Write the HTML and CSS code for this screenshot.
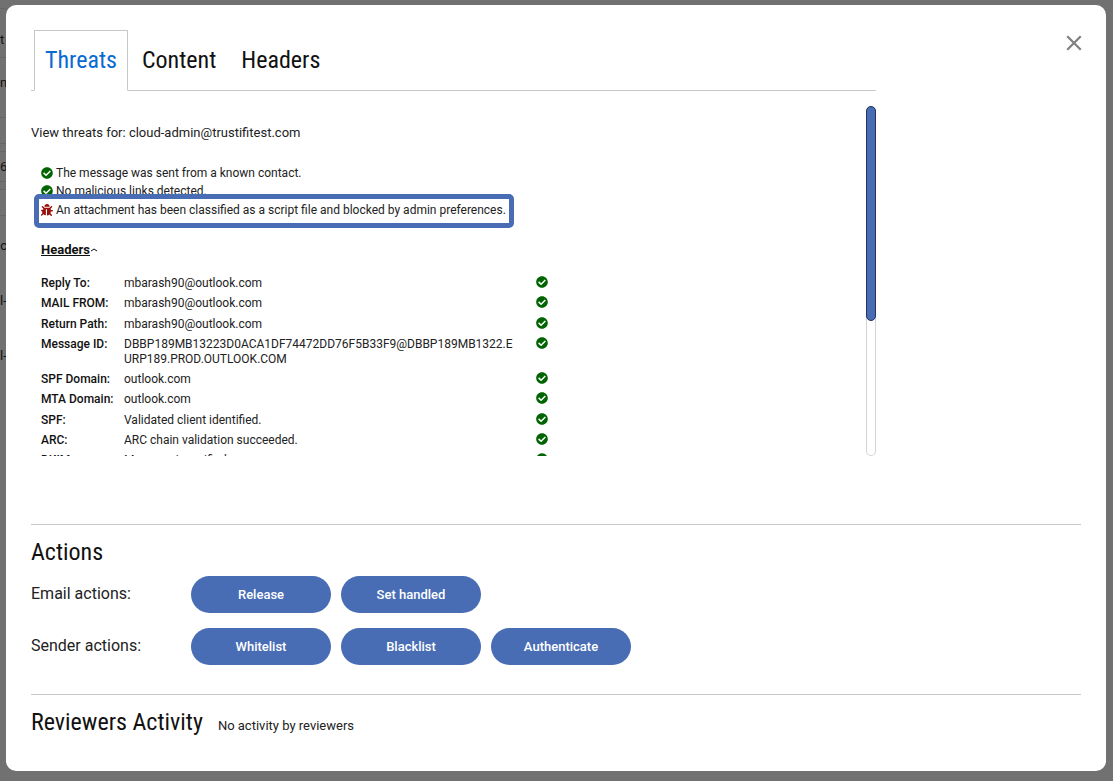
FILE: index.html
```html
<!DOCTYPE html>
<html lang="en">
<head>
    <meta charset="UTF-8">
    <meta name="viewport" content="width=device-width, initial-scale=1.0">
    <title>Threats</title>
    <link rel="stylesheet" href="styles.css">
</head>
<body>
    <svg class="sprite" aria-hidden="true">
        <symbol id="check" viewBox="0 0 512 512">
            <path fill="currentColor" d="M504 256c0 137-111 248-248 248S8 393 8 256 119 8 256 8s248 111 248 248zM227 387l184-184c6-6 6-16 0-22l-22-23c-7-6-17-6-23 0L216 308l-70-70c-6-6-16-6-23 0l-22 23c-6 6-6 16 0 22l104 104c6 6 16 6 22 0z"/>
        </symbol>
        <symbol id="bug" viewBox="0 0 512 512">
            <path fill="currentColor" d="M512 289c-1 17-16 31-33 31h-63v16c0 22-5 44-14 63l60 59a32 32 0 0 1-45 45l-54-54c-29 24-65 39-107 39V236c0-7-5-12-12-12h-24c-7 0-12 5-12 12v244c-42 0-78-15-107-39l-54 54a32 32 0 0 1-45-45l60-59c-9-19-14-41-14-63v-16H33c-17 0-32-14-33-31-1-18 14-33 32-33h64v-59L41 143a32 32 0 0 1 45-46l68 63h204l68-63a32 32 0 0 1 45 46l-55 54v59h64c18 0 33 15 32 33zM257 0c-62 0-112 50-112 112h224C369 50 319 0 257 0z"/>
        </symbol>
    </svg>

    <!-- Page under the dialog -->
    <div class="underlay" aria-hidden="true">
        <div class="strip strip-head"></div>
        <div class="strip strip-first">t</div>
        <div class="strip strip-second">n</div>
        <div class="strip strip-gap"></div>
        <div class="strip strip-thin"></div>
        <div class="strip strip-field">6</div>
        <div class="strip strip-thin"></div>
        <div class="strip strip-gap"></div>
        <div class="strip strip-row strip-cut">oc</div>
        <div class="strip strip-row">l-</div>
        <div class="strip strip-row">l-</div>
    </div>

    <main class="modal" role="dialog" aria-label="Threats">
        <button type="button" class="close" aria-label="Close">
            <svg viewBox="0 0 16 16"><path d="M2 2l12 12M14 2L2 14" fill="none" stroke="currentColor" stroke-width="2"/></svg>
        </button>

        <div class="details">
            <nav class="tabs">
                <a href="#" class="tab active">Threats</a>
                <a href="#" class="tab">Content</a>
                <a href="#" class="tab">Headers</a>
            </nav>

            <div class="scroll-box">
                <div class="scroll-area">
                    <p class="view-for">View threats for: cloud-admin@trustifitest.com</p>
                    <ul class="findings">
                        <li><svg class="icon ok"><use href="#check"/></svg>The message was sent from a known contact.</li>
                        <li><svg class="icon ok"><use href="#check"/></svg>No malicious links detected.</li>
                        <li class="highlight"><svg class="icon bad"><use href="#bug"/></svg>An attachment has been classified as a script file and blocked by admin preferences.</li>
                    </ul>
                    <button type="button" class="section-toggle"><span>Headers</span><svg viewBox="0 0 8 6"><path d="M1 4l3-2 3 2" fill="none" stroke="currentColor"/></svg></button>
                    <table class="headers-table">
                        <tr><th scope="row">Reply To:</th><td>mbarash90@outlook.com</td><td><svg class="icon ok"><use href="#check"/></svg></td></tr>
                        <tr><th scope="row">MAIL FROM:</th><td>mbarash90@outlook.com</td><td><svg class="icon ok"><use href="#check"/></svg></td></tr>
                        <tr><th scope="row">Return Path:</th><td>mbarash90@outlook.com</td><td><svg class="icon ok"><use href="#check"/></svg></td></tr>
                        <tr><th scope="row">Message ID:</th><td>DBBP189MB13223D0ACA1DF74472DD76F5B33F9@DBBP189MB1322.EURP189.PROD.OUTLOOK.COM</td><td><svg class="icon ok"><use href="#check"/></svg></td></tr>
                        <tr><th scope="row">SPF Domain:</th><td>outlook.com</td><td><svg class="icon ok"><use href="#check"/></svg></td></tr>
                        <tr><th scope="row">MTA Domain:</th><td>outlook.com</td><td><svg class="icon ok"><use href="#check"/></svg></td></tr>
                        <tr><th scope="row">SPF:</th><td>Validated client identified.</td><td><svg class="icon ok"><use href="#check"/></svg></td></tr>
                        <tr><th scope="row">ARC:</th><td>ARC chain validation succeeded.</td><td><svg class="icon ok"><use href="#check"/></svg></td></tr>
                        <tr><th scope="row">DKIM:</th><td>Message is verified.</td><td><svg class="icon ok"><use href="#check"/></svg></td></tr>
                    </table>
                </div>
                <div class="scrollbar"><div class="thumb"></div></div>
            </div>
        </div>

        <section class="actions">
            <h2>Actions</h2>
            <div class="action-row">
                <span class="action-label">Email actions:</span>
                <button type="button" class="btn">Release</button>
                <button type="button" class="btn">Set handled</button>
            </div>
            <div class="action-row">
                <span class="action-label">Sender actions:</span>
                <button type="button" class="btn">Whitelist</button>
                <button type="button" class="btn">Blacklist</button>
                <button type="button" class="btn">Authenticate</button>
            </div>
        </section>

        <section class="reviewers">
            <h2>Reviewers Activity</h2>
            <span>No activity by reviewers</span>
        </section>
    </main>
</body>
</html>
```
FILE: styles.css
```css
* {
    box-sizing: border-box;
}
body {
    margin: 0;
    padding: 5px 7px 10px 6px;
    min-height: 100vh;
    background-color: #717171;
    font-family: Roboto, sans-serif;
    font-size: 13px;
    color: #222;
}
.sprite {
    position: absolute;
    width: 0;
    height: 0;
}
button {
    font-family: inherit;
    cursor: pointer;
}

/* Page under the dialog */
.underlay {
    position: absolute;
    top: 0;
    left: 0;
    width: 7px;
    color: #111;
}
.strip {
    display: flex;
    align-items: center;
    border-bottom: 1px solid #666;
}
.strip-head { height: 9px; }
.strip-first {
    height: 49px;
    padding-top: 12px;
}
.strip-second {
    height: 60px;
    padding-bottom: 10px;
}
.strip-gap { height: 26px; }
.strip-thin { height: 8px; }
.strip-field { height: 30px; }
.strip-row {
    height: 55px;
    padding-top: 4px;
    border: 0;
}
.strip-cut {
    justify-content: flex-end;
}

/* Dialog */
.modal {
    position: relative;
    min-height: calc(100vh - 15px);
    padding: 25px;
    background-color: #fff;
    border-radius: 10px;
}
.close {
    position: absolute;
    top: 28px;
    right: 22px;
    width: 20px;
    height: 20px;
    padding: 1px;
    border: 0;
    background: none;
    color: #808080;
}
.close svg {
    display: block;
    width: 18px;
    height: 18px;
}
.details {
    margin-right: 205px;
}

/* Tabs */
.tabs {
    display: flex;
    height: 61px;
    padding-left: 3px;
    border-bottom: 1px solid #c8c8c8;
    font-family: "Roboto Condensed", Roboto, sans-serif;
    font-size: 24px;
}
.tab {
    height: 61px;
    padding: 0 11px;
    margin-right: 3px;
    line-height: 60px;
    color: #111;
    text-decoration: none;
}
.tab.active {
    padding: 0 10px;
    border: 1px solid #c8c8c8;
    border-bottom-color: #fff;
    line-height: 58px;
    color: #0a6ad0;
}

/* Scrolling list */
.scroll-box {
    display: flex;
    height: 350px;
    margin-top: 15px;
}
.scroll-area {
    flex: 1;
    padding: 18px 10px 100px;
    overflow-y: auto;
    scrollbar-width: none;
    font-size: 12px;
}
.scrollbar {
    width: 10px;
    border-radius: 5px;
    box-shadow: inset 0 0 0 1px #d3d3d3;
}
.thumb {
    height: 215px;
    border: 1px solid #22355c;
    border-radius: 5px;
    background-color: #486db5;
}
.view-for {
    margin: 0 0 22px -10px;
    font-size: 13px;
    line-height: 18px;
}
.findings {
    margin: 0;
    padding: 0;
    list-style: none;
    line-height: 18px;
}
.findings li {
    display: flex;
    align-items: center;
    gap: 3px;
}
.findings .highlight {
    position: relative;
    width: fit-content;
    margin: -6px 0 0 -7px;
    padding: 2px 3px 4px 2px;
    border: 5px solid #486db5;
    border-radius: 5px;
    background-color: #fff;
}
.icon {
    display: block;
    flex: none;
    width: 12px;
    height: 12px;
}
.ok { color: #006400; }
.bad { color: #9b0f0f; }
.section-toggle {
    display: flex;
    align-items: center;
    margin: 13px 0 17px;
    padding: 0;
    border: 0;
    background: none;
    color: #111;
    font-size: 13px;
    font-weight: 700;
    line-height: 18px;
}
.section-toggle span {
    text-decoration: underline;
}
.section-toggle svg {
    width: 8px;
    height: 6px;
}
.headers-table {
    width: 520px;
    border-collapse: collapse;
    table-layout: fixed;
    line-height: 15px;
}
.headers-table th,
.headers-table td {
    padding: 0 0 5px;
    text-align: left;
    vertical-align: top;
    overflow-wrap: anywhere;
}
.headers-table tr:nth-child(4n+2) td {
    padding-bottom: 6px;
}
.headers-table th {
    width: 83px;
    font-weight: 500;
    color: #111;
}
.headers-table td:nth-child(2) {
    padding-right: 20px;
}
.headers-table td:last-child {
    width: 25px;
}

/* Actions */
h2 {
    margin: 0;
    font-family: "Roboto Condensed", Roboto, sans-serif;
    font-size: 24px;
    font-weight: 400;
    line-height: 28px;
    color: #111;
}
.actions {
    margin-top: 68px;
    padding: 13px 0 29px;
    border-top: 1px solid #c8c8c8;
}
.action-row {
    display: flex;
    align-items: center;
    gap: 10px;
    margin-top: 15px;
}
.actions h2 + .action-row {
    margin-top: 10px;
}
.action-label {
    width: 150px;
    padding-bottom: 2px;
    font-size: 16px;
}
.btn {
    width: 140px;
    height: 37px;
    border: 0;
    border-radius: 19px;
    background-color: #486db5;
    color: #fff;
    font-size: 13px;
    font-weight: 500;
}
.reviewers {
    display: flex;
    align-items: baseline;
    gap: 15px;
    padding-top: 13px;
    border-top: 1px solid #c8c8c8;
}
```
